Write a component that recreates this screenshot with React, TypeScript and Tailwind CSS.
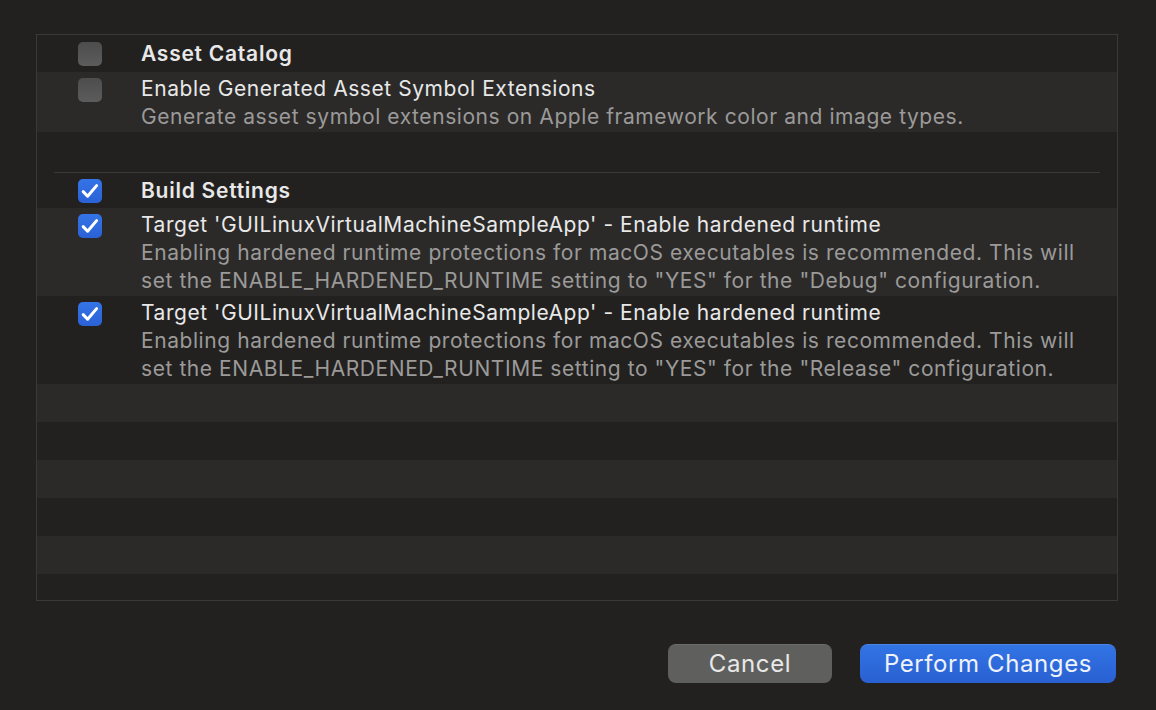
import React from "react";

function Check({ checked }: { checked: boolean }) {
  if (checked) {
    return (
      <div className="w-[24px] h-[24px] rounded-[5px] bg-gradient-to-b from-[#3474e6] to-[#2b62d6] flex items-center justify-center shrink-0">
        <svg width="24" height="24" viewBox="0 0 24 24">
          <path d="M5.2 12.6 L9.6 17.2 L18.6 6.6" fill="none" stroke="white" strokeWidth="3" strokeLinecap="round" strokeLinejoin="round" />
        </svg>
      </div>
    );
  }
  return (
    <div className="w-[24px] h-[24px] rounded-[5px] bg-gradient-to-b from-[#4d4d4d] to-[#5c5c5c] shrink-0" />
  );
}

function Row({
  checked,
  title,
  lines,
  light,
  h,
  cbTop,
}: {
  checked: boolean;
  title: string;
  lines?: string[];
  light?: boolean;
  h: string;
  cbTop: string;
}) {
  return (
    <div className={`flex shrink-0 ${h} ${light ? "bg-[#2b2a29]" : "bg-[#222120]"}`}>
      <div className={`w-[104px] pl-[41px] shrink-0 ${cbTop}`}>
        <Check checked={checked} />
      </div>
      <div className="flex flex-col justify-start whitespace-nowrap">
        <div className="leading-[28px] text-[21px] tracking-[0.55px] text-[#e8e8e8]">{title}</div>
        {lines?.map((l, i) => (
          <div key={i} className="leading-[28px] text-[21px] tracking-[0.57px] text-[#9b9a99]">
            {l}
          </div>
        ))}
      </div>
    </div>
  );
}

export default function App() {
  const desc1 = "Enabling hardened runtime protections for macOS executables is recommended. This will";
  return (
    <div
      className="w-[1156px] h-[710px] bg-[#222120] flex flex-col pt-[34px] pl-[36px] pr-[38px] overflow-hidden"
      style={{ fontFamily: "Inter, 'Noto Sans', sans-serif" }}
    >
      <div className="h-[567px] border border-[#3a3938] flex flex-col overflow-hidden">
        <div className="flex h-[37px] bg-[#222120] items-center shrink-0">
          <div className="w-[104px] pl-[41px] shrink-0">
            <Check checked={false} />
          </div>
          <div className="text-[21px] font-semibold tracking-[0.75px] text-[#e8e8e8] leading-[28px] pt-[1px]">Asset Catalog</div>
        </div>
        <Row
          checked={false}
          title="Enable Generated Asset Symbol Extensions"
          lines={["Generate asset symbol extensions on Apple framework color and image types."]}
          light
          h="h-[60px] pt-[3px]"
          cbTop="pt-[3px]"
        />
        <div className="h-[41px] shrink-0 bg-[#222120] flex flex-col justify-end px-[17px]">
          <div className="h-[1px] bg-[#3a3938]" />
        </div>
        <div className="flex h-[35px] bg-[#222120] items-center shrink-0">
          <div className="w-[104px] pl-[41px] shrink-0">
            <Check checked />
          </div>
          <div className="text-[21px] font-semibold tracking-[0.75px] text-[#e8e8e8] leading-[28px]">Build Settings</div>
        </div>
        <Row
          checked
          title="Target 'GUILinuxVirtualMachineSampleApp' - Enable hardened runtime"
          lines={[desc1, 'set the ENABLE_HARDENED_RUNTIME setting to "YES" for the "Debug" configuration.']}
          light
          h="h-[88px] pt-[3px]"
          cbTop="pt-[3px]"
        />
        <Row
          checked
          title="Target 'GUILinuxVirtualMachineSampleApp' - Enable hardened runtime"
          lines={[desc1, 'set the ENABLE_HARDENED_RUNTIME setting to "YES" for the "Release" configuration.']}
          h="h-[88px] pt-[3px]"
          cbTop="pt-[3px]"
        />
        <div className="h-[38px] shrink-0 bg-[#2b2a29]" />
        <div className="h-[38px] shrink-0 bg-[#222120]" />
        <div className="h-[38px] shrink-0 bg-[#2b2a29]" />
        <div className="h-[38px] shrink-0 bg-[#222120]" />
        <div className="h-[38px] shrink-0 bg-[#2b2a29]" />
        <div className="flex-1 bg-[#222120]" />
      </div>
      <div className="flex justify-end gap-[28px] mt-[43px] pr-[2px]">
        <button className="w-[164px] h-[39px] rounded-[8px] bg-[#5f5f5e] text-[#e8e8e8] text-[24px] tracking-[0.6px] leading-none border-t border-[#6b6b6a]">
          Cancel
        </button>
        <button className="w-[256px] h-[39px] rounded-[8px] bg-gradient-to-b from-[#3274e4] to-[#2960d2] text-[#eef2fb] text-[24px] tracking-[0.6px] leading-none border-t border-[#4a86ea]">
          Perform Changes
        </button>
      </div>
    </div>
  );
}
